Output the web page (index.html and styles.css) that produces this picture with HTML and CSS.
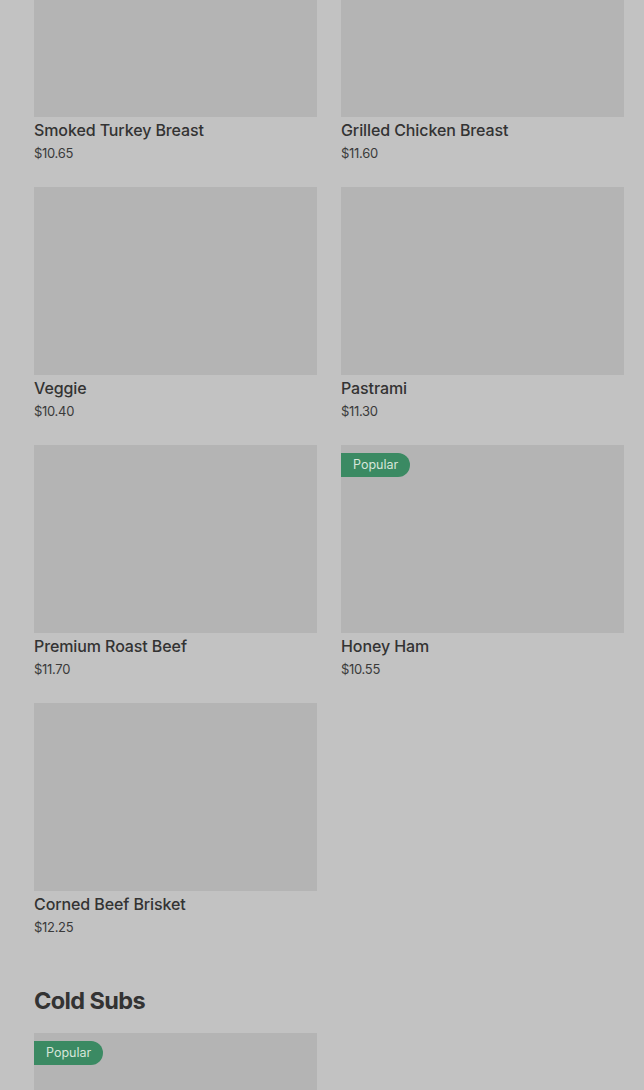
FILE: index.html
```html
<!DOCTYPE html>
<html>
<head>
<meta charset="utf-8">
<link rel="stylesheet" href="styles.css">
</head>
<body>
<main class="page">
  <section class="grid grid-first">
    <div class="card"><div class="thumb"></div><div class="name">Smoked Turkey Breast</div><div class="price">$10.65</div></div>
    <div class="card"><div class="thumb"></div><div class="name">Grilled Chicken Breast</div><div class="price">$11.60</div></div>
    <div class="card"><div class="thumb"></div><div class="name">Veggie</div><div class="price">$10.40</div></div>
    <div class="card"><div class="thumb"></div><div class="name">Pastrami</div><div class="price">$11.30</div></div>
    <div class="card"><div class="thumb"></div><div class="name">Premium Roast Beef</div><div class="price">$11.70</div></div>
    <div class="card"><div class="thumb"><span class="badge">Popular</span></div><div class="name">Honey Ham</div><div class="price">$10.55</div></div>
    <div class="card"><div class="thumb"></div><div class="name">Corned Beef Brisket</div><div class="price">$12.25</div></div>
  </section>
  <h2 class="heading">Cold Subs</h2>
  <section class="grid">
    <div class="card"><div class="thumb"><span class="badge">Popular</span></div></div>
  </section>
</main>
</body>
</html>
```
FILE: styles.css
```css
html, body {
  margin: 0;
  padding: 0;
  background: #c2c2c2;
  overflow: hidden;
}
.page {
  padding: 0 20px 0 34px;
  font-family: Inter, "Liberation Sans", sans-serif;
  color: #333333;
}
.grid {
  display: grid;
  grid-template-columns: 283px 283px;
  column-gap: 24px;
  row-gap: 24px;
}
.grid-first {
  margin-top: -71px;
}
.card {
  display: flex;
  flex-direction: column;
}
.thumb {
  position: relative;
  height: 188px;
  background: #b4b4b4;
}
.name {
  margin-top: 2px;
  font-size: 16px;
  font-weight: 500;
  line-height: 22px;
  color: #333333;
  letter-spacing: -0.1px;
}
.price {
  margin-top: 2px;
  font-size: 13px;
  line-height: 20px;
  color: #3a3a3a;
  letter-spacing: -0.3px;
}
.badge {
  position: absolute;
  top: 8px;
  left: 0;
  height: 24px;
  line-height: 24px;
  padding: 0 12px;
  background: #3b8a63;
  color: #d6e6da;
  font-size: 12.5px;
  border-radius: 0 12px 12px 0;
}
.heading {
  margin: 48px 0 16px;
  font-size: 23.5px;
  line-height: 32px;
  font-weight: 700;
  letter-spacing: -0.6px;
  color: #333333;
}
```
